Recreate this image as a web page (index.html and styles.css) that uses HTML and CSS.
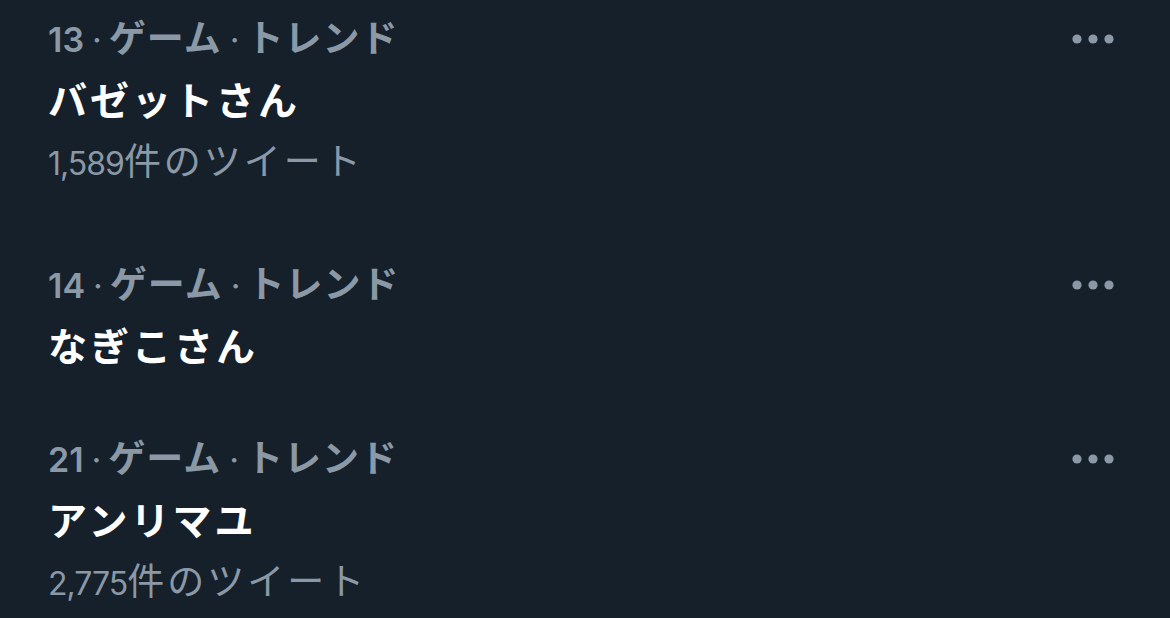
FILE: index.html
```html
<!DOCTYPE html>
<html lang="ja">
<head>
    <meta charset="UTF-8">
    <meta name="viewport" content="width=device-width, initial-scale=1.0">
    <title>トレンド</title>
    <link rel="stylesheet" href="styles.css">
</head>
<body>
    <div class="trends">
        <div class="trend">
            <div class="trend-body">
                <div class="meta">13<span class="dot">·</span><span class="jp">ゲーム</span><span class="dot">·</span><span class="jp">トレンド</span></div>
                <div class="title">バゼットさん</div>
                <div class="count">1,589<span class="jp">件のツイート</span></div>
            </div>
            <div class="more">
                <svg viewBox="0 0 44 12" width="44" height="12"><circle cx="6" cy="6" r="4.6"/><circle cx="22" cy="6" r="4.6"/><circle cx="38" cy="6" r="4.6"/></svg>
            </div>
        </div>
        <div class="trend">
            <div class="trend-body">
                <div class="meta">14<span class="dot">·</span><span class="jp">ゲーム</span><span class="dot">·</span><span class="jp">トレンド</span></div>
                <div class="title">なぎこさん</div>
            </div>
            <div class="more">
                <svg viewBox="0 0 44 12" width="44" height="12"><circle cx="6" cy="6" r="4.6"/><circle cx="22" cy="6" r="4.6"/><circle cx="38" cy="6" r="4.6"/></svg>
            </div>
        </div>
        <div class="trend">
            <div class="trend-body">
                <div class="meta">21<span class="dot">·</span><span class="jp">ゲーム</span><span class="dot">·</span><span class="jp">トレンド</span></div>
                <div class="title">アンリマユ</div>
                <div class="count">2,775<span class="jp">件のツイート</span></div>
            </div>
            <div class="more">
                <svg viewBox="0 0 44 12" width="44" height="12"><circle cx="6" cy="6" r="4.6"/><circle cx="22" cy="6" r="4.6"/><circle cx="38" cy="6" r="4.6"/></svg>
            </div>
        </div>
    </div>
</body>
</html>
```

FILE: styles.css
```css
body {
    margin: 0;
    background-color: #15202b;
    font-family: Inter, "Noto Sans CJK JP", sans-serif;
    color: #ffffff;
    overflow: hidden;
}
.trends {
    display: flex;
    flex-direction: column;
}
.trend {
    display: flex;
    justify-content: space-between;
    align-items: flex-start;
    padding: 19px 55px 47px 48px;
}
.meta {
    height: 40px;
    font-size: 34px;
    line-height: 40px;
    color: #8b98a5;
    font-weight: 600;
    white-space: nowrap;
}
.meta .jp {
    font-size: 37px;
    letter-spacing: 1px;
}
.dot {
    padding: 0 7px 0 8px;
    font-weight: 400;
}
.title {
    height: 52px;
    margin-top: 16px;
    font-size: 39px;
    line-height: 52px;
    font-weight: 700;
    letter-spacing: 3px;
}
.count {
    height: 40px;
    margin-top: 15px;
    margin-bottom: 17px;
    font-size: 32px;
    line-height: 40px;
    color: #8b98a5;
    letter-spacing: -1px;
    white-space: nowrap;
}
.count .jp {
    font-size: 37px;
    letter-spacing: 3px;
}
.more {
    display: flex;
    align-items: center;
    height: 40px;
}
.more svg {
    display: block;
    fill: #8b98a5;
}
```
